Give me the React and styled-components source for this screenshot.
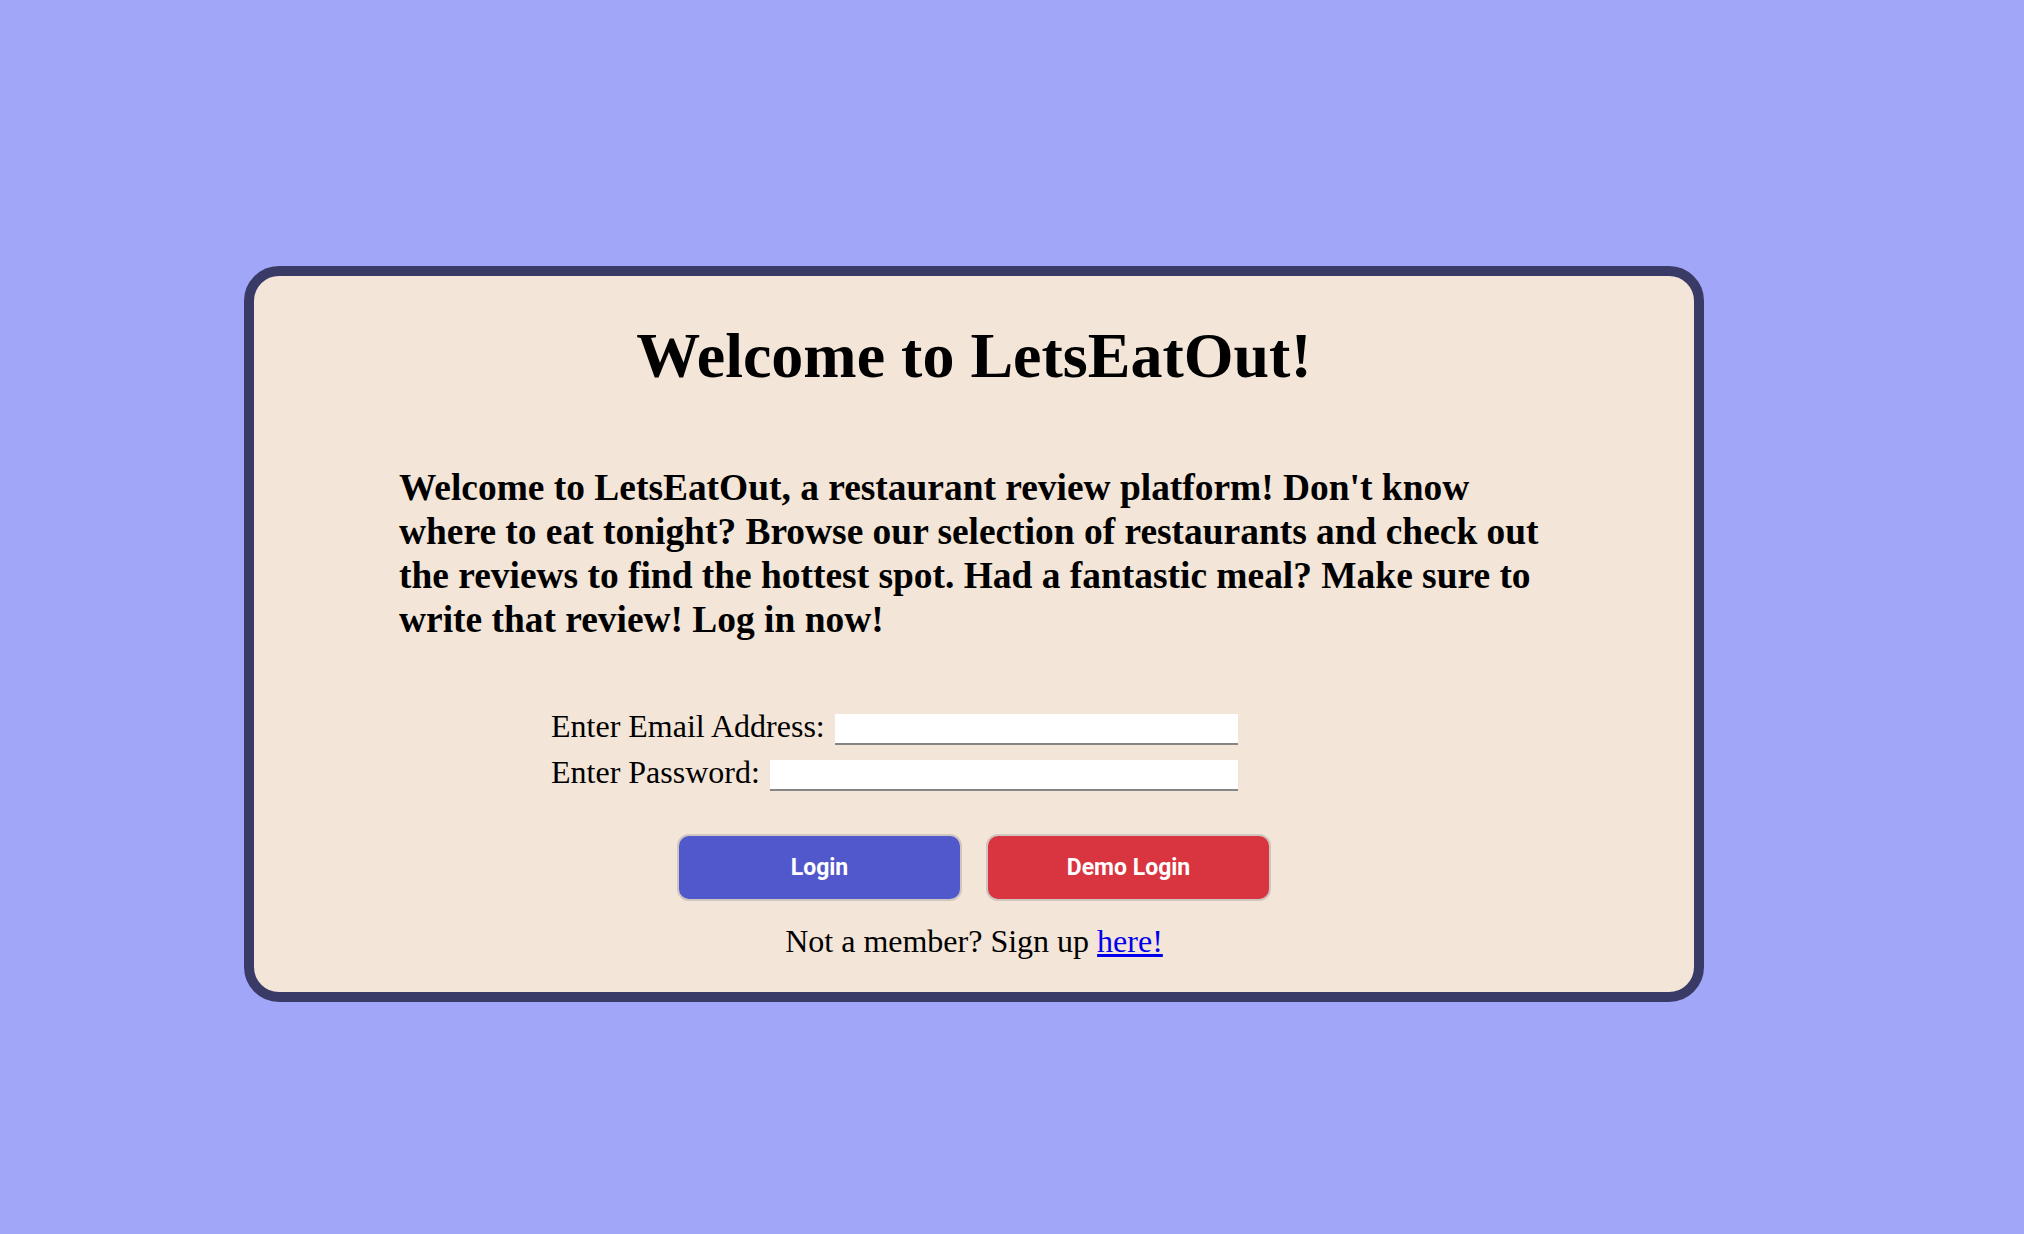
import React from 'react';
import styled, { createGlobalStyle } from 'styled-components';

const GlobalStyle = createGlobalStyle`
    html, body {
        margin: 0;
        padding: 0;
        background: #a2a6f8;
    }
    body {
        font-family: "Liberation Serif", "Times New Roman", serif;
        color: #000;
    }
`

const Page = styled.div `
    min-height: 100vh;
    box-sizing: border-box;
    padding: 266px 0 0 244px;
    background: #a2a6f8;
`

const Card = styled.div `
    width: 1460px;
    box-sizing: border-box;
    background-color: #f3e5d7;
    border: 10px solid #3a3a66;
    border-radius: 35px;
    padding: 43px 0 32px 0;
    display: flex;
    flex-direction: column;
`

const Title = styled.h1 `
    margin: 0;
    font-size: 64px;
    line-height: 74px;
    font-weight: 700;
    text-align: center;
`

const Intro = styled.h3 `
    margin: 73px 0 0 145px;
    font-size: 37.44px;
    line-height: 44px;
    font-weight: 700;
`

const Form = styled.form `
    width: 687px;
    margin: 66px 0 0 297px;
    display: flex;
    flex-direction: column;
    gap: 9px;
`

const Row = styled.label `
    display: flex;
    align-items: flex-end;
    font-size: 32px;
    line-height: 37px;
`

const Input = styled.input `
    flex: 1;
    margin-left: 10px;
    height: 31px;
    box-sizing: border-box;
    border: none;
    border-bottom: 2px solid #858585;
    background: #fff;
    font-size: 18px;
    padding: 0 4px;
    outline: none;
`

const Buttons = styled.div `
    display: flex;
    justify-content: center;
    gap: 24px;
    margin-top: 43px;
`

const Button = styled.button `
    width: 285px;
    height: 67px;
    border: 2px solid #cfc6c0;
    border-radius: 12px;
    background-color: ${props => props.bg};
    color: #fff;
    font-family: Roboto, "Liberation Sans", sans-serif;
    font-weight: 700;
    font-size: 23px;
    cursor: pointer;
`

const SignUp = styled.p `
    margin: 22px 0 0 0;
    font-size: 32px;
    line-height: 37px;
    text-align: center;

    a {
        color: #0000ee;
        text-decoration: underline;
    }
`

const App = () => {
    return (
        <>
            <GlobalStyle />
            <Page>
                <Card>
                    <Title>Welcome to LetsEatOut!</Title>
                    <Intro>
                        Welcome to LetsEatOut, a restaurant review platform! Don't know<br />
                        where to eat tonight? Browse our selection of restaurants and check out<br />
                        the reviews to find the hottest spot. Had a fantastic meal? Make sure to<br />
                        write that review! Log in now!
                    </Intro>
                    <Form onSubmit={e => e.preventDefault()}>
                        <Row>
                            Enter Email Address:
                            <Input type="email" />
                        </Row>
                        <Row>
                            Enter Password:
                            <Input type="password" />
                        </Row>
                    </Form>
                    <Buttons>
                        <Button bg="#5158cc">Login</Button>
                        <Button bg="#d93541">Demo Login</Button>
                    </Buttons>
                    <SignUp>
                        Not a member? Sign up <a href="#signup">here!</a>
                    </SignUp>
                </Card>
            </Page>
        </>
    )
}

export default App;
